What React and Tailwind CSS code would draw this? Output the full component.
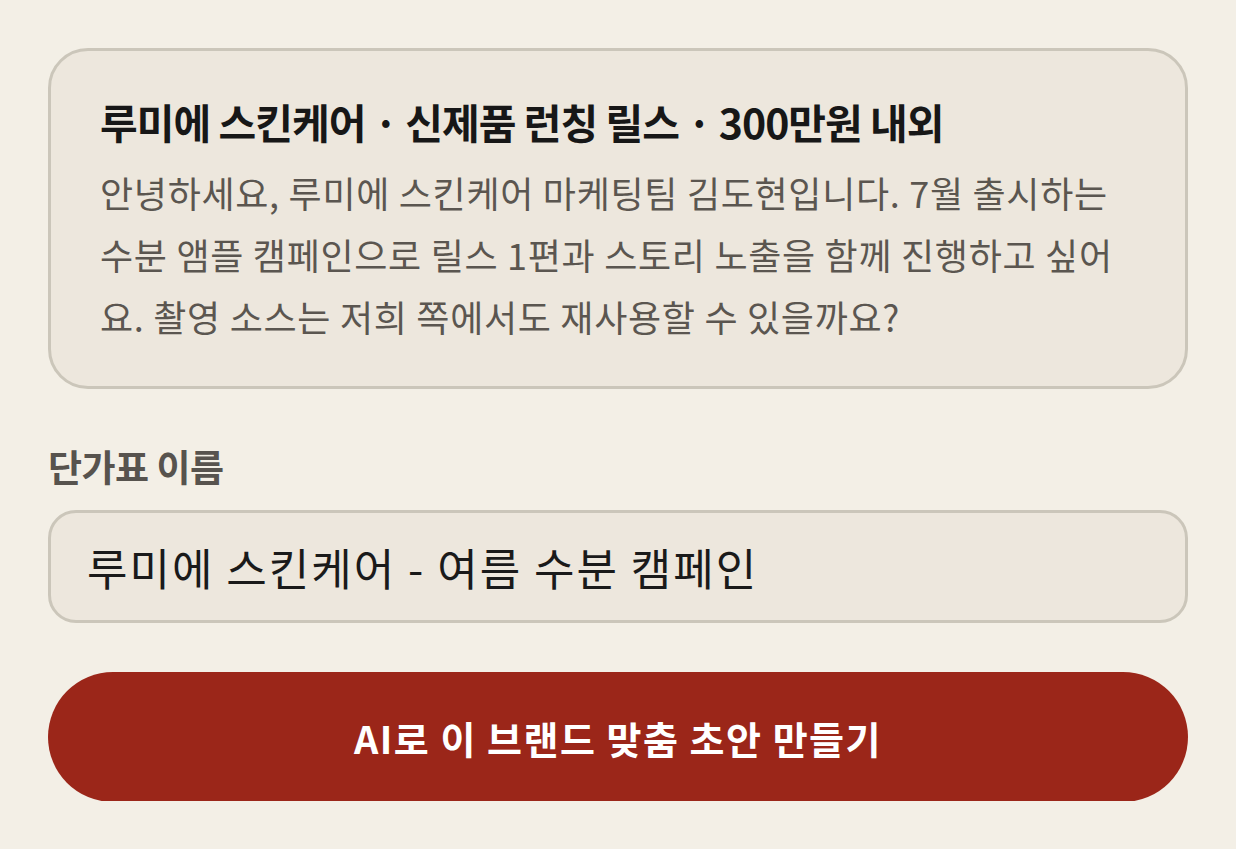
import React from 'react';

const font = { fontFamily: '"Noto Sans CJK KR", "Noto Sans", sans-serif' };

const App = () => {
  return (
    <div className="min-h-screen bg-[#f3efe6] px-[48px] pt-[48px]" style={font}>
      {/* Brief card */}
      <div className="rounded-[40px] border-[3px] border-[#cbc6ba] bg-[#ede7dd] px-[49px] pt-[45px] pb-[39px]">
        <h2 className="text-[41px] font-bold leading-[50px] tracking-[-1px] text-[#171717]">
          루미에 스킨케어 · 신제품 런칭 릴스 · 300만원 내외
        </h2>
        <p className="mt-[15px] text-[36px] leading-[62px] tracking-[0.7px] text-[#5b5650]">
          안녕하세요, 루미에 스킨케어 마케팅팀 김도현입니다. 7월 출시하는 수분 앰플 캠페인으로 릴스 1편과 스토리 노출을 함께 진행하고 싶어요. 촬영 소스는 저희 쪽에서도 재사용할 수 있을까요?
        </p>
      </div>

      {/* Rate card name */}
      <label className="mt-[55px] block text-[37px] font-bold leading-[44px] tracking-[-0.5px] text-[#57534e]">
        단가표 이름
      </label>
      <div className="mt-[22px] flex h-[113px] items-center rounded-[28px] border-[3px] border-[#cbc6ba] bg-[#ede7dd] px-[36px]">
        <span className="text-[44px] leading-none tracking-[2px] text-[#1a1a1a]">루미에 스킨케어 - 여름 수분 캠페인</span>
      </div>

      <div className="mt-[49px] h-[129px] overflow-hidden">
        <button className="flex h-[130px] w-full items-center justify-center rounded-full bg-[#9b2619] text-[38px] font-bold tracking-[1.5px] text-white">
          AI로 이 브랜드 맞춤 초안 만들기
        </button>
      </div>
    </div>
  );
};

export default App;
